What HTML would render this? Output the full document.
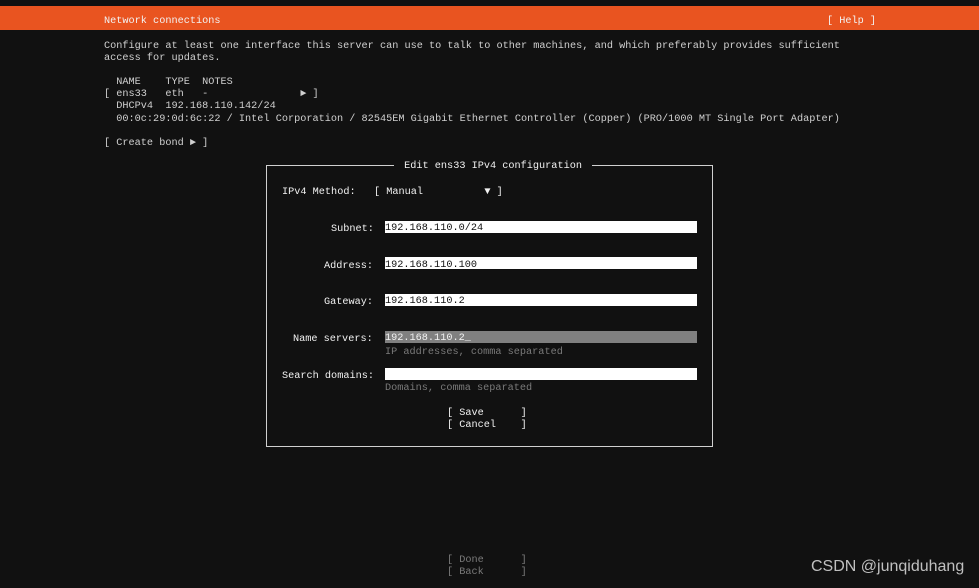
<!DOCTYPE html>
<html><head><meta charset="utf-8"><style>
html,body{margin:0;padding:0;}
body{width:979px;height:588px;background:#111111;position:relative;overflow:hidden;}
.t{position:absolute;white-space:pre;font-family:"Liberation Mono",monospace;font-size:10.22px;line-height:12px;color:#d0d0d0;margin-top:2px;}
.w{color:#f2f2f2;}
.g{color:#7a7a7a;}
.bar{position:absolute;left:0;top:6px;width:979px;height:24px;background:#e95420;}
.inp{position:absolute;left:385px;width:312px;height:12px;background:#fff;}
.box{position:absolute;left:266px;top:165px;width:445px;height:280px;border:1px solid #d0d0d0;}
</style></head><body>
<div class="bar"></div>
<div class="t w" style="left:104px;top:13px">Network connections</div>
<div class="t w" style="left:827px;top:13px">[ Help ]</div>
<div class="t" style="left:104px;top:38px">Configure at least one interface this server can use to talk to other machines, and which preferably provides sufficient</div>
<div class="t" style="left:104px;top:50px">access for updates.</div>
<div class="t" style="left:104px;top:74px">  NAME    TYPE  NOTES</div>
<div class="t" style="left:104px;top:86px">[ ens33   eth   -               ► ]</div>
<div class="t" style="left:104px;top:98px">  DHCPv4  192.168.110.142/24</div>
<div class="t" style="left:104px;top:111px">  00:0c:29:0d:6c:22 / Intel Corporation / 82545EM Gigabit Ethernet Controller (Copper) (PRO/1000 MT Single Port Adapter)</div>
<div class="t" style="left:104px;top:135px">[ Create bond ► ]</div>

<div class="box"></div>
<div class="t w" style="left:394px;top:158px;background:#111;padding:0 4px"> Edit ens33 IPv4 configuration </div>
<div class="t w" style="left:282px;top:184px">IPv4 Method:   [ Manual          ▼ ]</div>
<div class="t w" style="left:331px;top:221px">Subnet:</div>
<div class="inp" style="top:221px"></div>
<div class="t" style="left:385px;top:220px;color:#111">192.168.110.0/24</div>
<div class="t w" style="left:324px;top:258px">Address:</div>
<div class="inp" style="top:257px"></div>
<div class="t" style="left:385px;top:257px;color:#111">192.168.110.100</div>
<div class="t w" style="left:324px;top:294px">Gateway:</div>
<div class="inp" style="top:294px"></div>
<div class="t" style="left:385px;top:293px;color:#111">192.168.110.2</div>
<div class="t w" style="left:293px;top:331px">Name servers:</div>
<div class="inp" style="top:331px;background:#808080"></div>
<div class="t w" style="left:385px;top:330px">192.168.110.2_</div>
<div class="t g" style="left:385px;top:344px">IP addresses, comma separated</div>
<div class="t w" style="left:282px;top:368px">Search domains:</div>
<div class="inp" style="top:368px"></div>
<div class="t g" style="left:385px;top:380px">Domains, comma separated</div>
<div class="t w" style="left:447px;top:405px">[ Save      ]</div>
<div class="t w" style="left:447px;top:417px">[ Cancel    ]</div>

<div class="t g" style="left:447px;top:552px">[ Done      ]</div>
<div class="t g" style="left:447px;top:564px">[ Back      ]</div>
<div style="position:absolute;left:811px;top:558px;font-family:'Liberation Sans',sans-serif;font-size:16px;color:#c0c0c0;white-space:pre">CSDN @junqiduhang</div>
</body></html>
